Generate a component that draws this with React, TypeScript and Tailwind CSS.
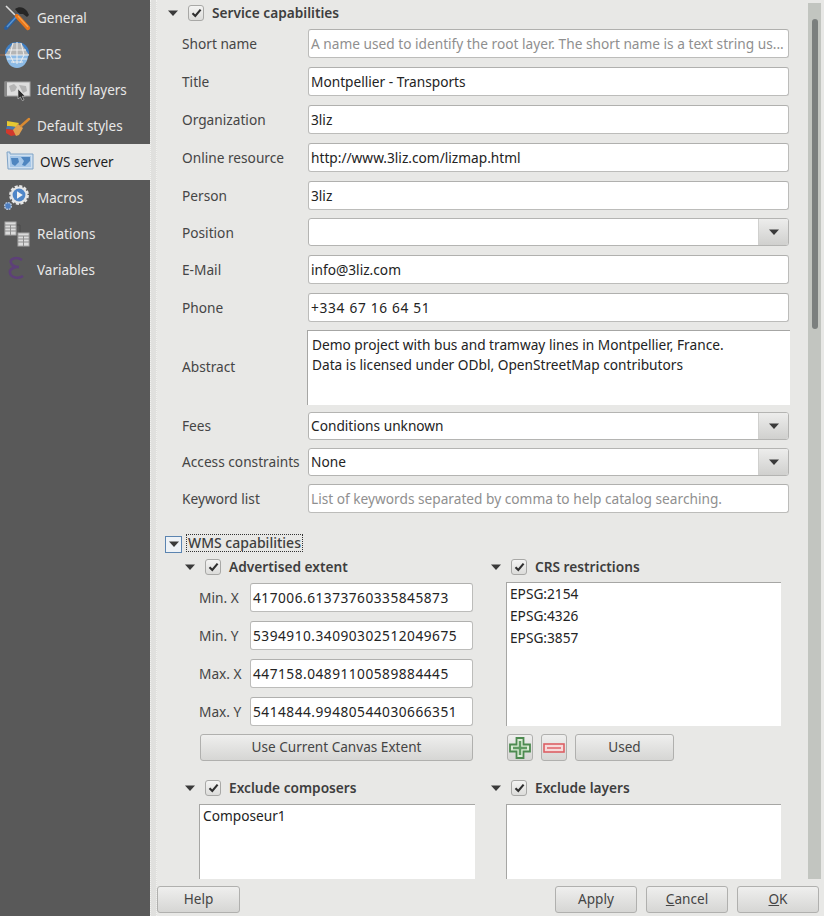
import React from 'react';

const font = { fontFamily: '"Noto Sans", sans-serif' };

function Arrow() {
  return (
    <svg width="10" height="6" viewBox="0 0 10 6" className="shrink-0">
      <path d="M0 0.5h10L5 6z" fill="#3a3a3a" />
    </svg>
  );
}

function Check() {
  return (
    <span className="w-[16px] h-[16px] shrink-0 rounded-[3px] border border-[#a8a8a6] bg-gradient-to-b from-[#f4f4f3] to-[#dcdcda] flex items-center justify-center">
      <svg width="11" height="10" viewBox="0 0 11 10">
        <path d="M1.5 5.2 4.3 8 9.6 1.6" fill="none" stroke="#2f2f2f" strokeWidth="2.1" />
      </svg>
    </span>
  );
}

function GroupTitle({ label }: { label: string }) {
  return (
    <div className="flex items-center h-[20px]">
      <Arrow />
      <span className="ml-[10px]"><Check /></span>
      <span className="ml-[8px] font-semibold text-[#3e3e3e] text-[13.7px]">{label}</span>
    </div>
  );
}

function Field({ value, placeholder, spaced }: { value?: string; placeholder?: boolean; spaced?: string }) {
  return (
    <div
      className={`flex-1 h-[29px] min-w-0 px-[2px] pt-[2px] flex items-center rounded-[3px] border border-[#bcbcba] border-t-[#b0b0ae] bg-white text-[13.7px] whitespace-nowrap overflow-hidden ${
        placeholder ? 'text-[#8f8f8f]' : 'text-[#232323]'
      } ${spaced ?? ''}`}
    >
      {value}
    </div>
  );
}

function Combo({ value }: { value?: string }) {
  return (
    <div className="flex-1 h-[28px] flex rounded-[3px] border border-[#b4b4b2] bg-white text-[13.7px] text-[#232323] overflow-hidden">
      <span className="flex-1 px-[2px] pt-[2px] flex items-center">{value}</span>
      <span className="w-[30px] flex items-center justify-center border-l border-[#d0d0ce] bg-gradient-to-b from-[#ededec] to-[#d0d0ce]">
        <Arrow />
      </span>
    </div>
  );
}

function Row({ label, h, children }: { label: string; h: string; children: React.ReactNode }) {
  return (
    <div className={`flex items-center ${h}`}>
      <span className="w-[126px] shrink-0 pt-[2px] text-[13.7px] text-[#454545]">{label}</span>
      {children}
    </div>
  );
}

function Btn({ children, w }: { children: React.ReactNode; w: string }) {
  return (
    <div
      className={`${w} h-[27px] shrink-0 flex items-center justify-center rounded-[3px] border border-[#b0b0ae] bg-gradient-to-b from-[#efefee] to-[#d6d6d4] text-[13.6px] text-[#454545]`}
    >
      {children}
    </div>
  );
}

function ExtentRow({ label, value }: { label: string; value: string }) {
  return (
    <div className="flex items-center h-[38px]">
      <span className="w-[51px] shrink-0 pt-[2px] text-[13.7px] text-[#454545]">{label}</span>
      <Field value={value} spaced="tracking-[0.5px]" />
    </div>
  );
}

function Slot({ children }: { children: React.ReactNode }) {
  return (
    <svg width="36" height="36" viewBox="0 0 36 36" className="shrink-0">
      {children}
    </svg>
  );
}

function IconGeneral() {
  return (
    <Slot>
      <path d="M15 9c4-3 9-2 12 2l2 4-2 2-4-3-4 0-4-5z" fill="#262626" />
      <path d="M6 28 18 15" stroke="#2a5f9e" strokeWidth="4" strokeLinecap="round" />
      <path d="M7 27 17 16" stroke="#5b96d2" strokeWidth="1.4" />
      <path d="M6 6 15 15" stroke="#dcdcdc" strokeWidth="1.6" />
      <path d="M17 16 28 28" stroke="#e8751a" strokeWidth="4.4" strokeLinecap="round" />
      <path d="M18 16 28 27" stroke="#f7a14a" strokeWidth="1.2" />
    </Slot>
  );
}

function IconCrs() {
  return (
    <Slot>
      <path d="M0 19h5" stroke="#a06a4a" strokeWidth="1" />
      <ellipse cx="17" cy="17" rx="12" ry="11" fill="#3f7fc4" />
      <path d="M6 19a11 13 0 0 0 22 0z" fill="#8dbbe6" />
      <path d="M5 19 13 7h8l8 12z" fill="#b5b5b5" />
      <g fill="none" stroke="#eeeeee" strokeWidth="1">
        <path d="M8 14h18M5 19h24M7 23h20M11 26h12M13 7l-3 12 4 8M21 7l3 12-4 8M17 6v22" />
      </g>
    </Slot>
  );
}

function IconIdentify() {
  return (
    <Slot>
      <rect x="5" y="10" width="25" height="14" fill="#dedede" stroke="#a5a5a5" />
      <path d="M5 10h2v14H5z" fill="#8a8a8a" />
      <path d="M9 14l5-2 3 3-2 4-4 1zM19 13l7 1 1 5-4 2-2-4z" fill="#b5b5b5" />
      <path d="M18 17v10l2.4-2 2 3.6 1.6-.8-1.8-3.6h3z" fill="#2c2c2c" stroke="#d5d5d5" strokeWidth="0.6" />
    </Slot>
  );
}

function IconStyles() {
  return (
    <Slot>
      <path d="M7 13l12 2-3 4-9-1z" fill="#e6c832" />
      <path d="M7 18l9 1-2 3-8-1z" fill="#4a78b0" />
      <path d="M6 21l8 1 2 5-5 1-5-3z" fill="#d2382c" />
      <path d="M13 22l5-6 5 4-4 7-3 1z" fill="#e0a050" />
      <path d="M21 18 29 11" stroke="#d98a32" strokeWidth="2.4" strokeLinecap="round" />
    </Slot>
  );
}

function IconOws() {
  return (
    <Slot>
      <path d="M7 8h3v2h23v15H8z" fill="#cfe0f0" stroke="#7fa3c6" />
      <path d="M10 12h21v11H10z" fill="#a6c7e8" />
      <path d="M11 14h7l1 4-4 4-3-2zM21 13h9v4l-5 5-3-1 2-4z" fill="#4f86c0" />
    </Slot>
  );
}

function IconMacros() {
  return (
    <Slot>
      <circle cx="19" cy="15" r="8.6" fill="#e6e6e6" stroke="#e6e6e6" strokeWidth="2.6" strokeDasharray="3 1.5" />
      <circle cx="19" cy="15" r="6.4" fill="#4f86c8" />
      <path d="M17 11.2v7.6l5.8-3.8z" fill="#f2f2f2" />
      <circle cx="8" cy="26" r="3.4" fill="#4f7fc0" stroke="#b5c4d8" strokeWidth="1.4" strokeDasharray="1.8 0.8" />
    </Slot>
  );
}

function IconRelations() {
  const grid = (x: number, y: number) => (
    <g>
      <rect x={x} y={y} width="11" height="13" fill="#dcdcdc" stroke="#a8a8a8" />
      <path d={`M${x} ${y + 3}h11M${x} ${y + 6}h11M${x} ${y + 9}h11M${x + 5.5} ${y + 3}v10`} stroke="#8e8e8e" />
    </g>
  );
  return (
    <Slot>
      <path d="M16 9h4v8" fill="none" stroke="#4a4a4a" />
      {grid(5, 6)}
      {grid(18, 17)}
    </Slot>
  );
}

function IconVariables() {
  return (
    <Slot>
      <path d="M22 8C16 4 9 7 11 11c1 3 5 4 8 4-5 0-10 2-9 6 1 5 9 6 13 3" fill="none" stroke="#5d4078" strokeWidth="2.6" />
    </Slot>
  );
}

const sidebarItems = [
  { label: 'General', icon: <IconGeneral /> },
  { label: 'CRS', icon: <IconCrs /> },
  { label: 'Identify layers', icon: <IconIdentify /> },
  { label: 'Default styles', icon: <IconStyles /> },
  { label: 'OWS server', icon: <IconOws />, active: true },
  { label: 'Macros', icon: <IconMacros /> },
  { label: 'Relations', icon: <IconRelations /> },
  { label: 'Variables', icon: <IconVariables /> },
];

function Sidebar() {
  return (
    <div className="w-[150px] shrink-0 bg-[#595959]">
      {sidebarItems.map((item) =>
        item.active ? (
          <div key={item.label} className="h-[36px] flex items-center bg-[#e8e8e6] text-[#1e1e1e] text-[13.5px]">
            <span className="w-[40px] shrink-0 flex">{item.icon}</span>
            <span>{item.label}</span>
          </div>
        ) : (
          <div key={item.label} className="h-[36px] flex items-center text-[#e8e8e8] text-[13.5px]">
            <span className="w-[37px] shrink-0 flex">{item.icon}</span>
            <span>{item.label}</span>
          </div>
        ),
      )}
    </div>
  );
}

function ServiceCapabilities() {
  return (
    <div className="pl-[11px] pr-[18px]">
      <div className="pt-[3px]">
        <GroupTitle label="Service capabilities" />
      </div>
      <div className="pl-[14px] pt-[1px]">
        <Row label="Short name" h="h-[38px]">
          <Field placeholder value="A name used to identify the root layer. The short name is a text string us..." />
        </Row>
        <Row label="Title" h="h-[38px]"><Field value="Montpellier - Transports" /></Row>
        <Row label="Organization" h="h-[38px]"><Field value="3liz" /></Row>
        <Row label="Online resource" h="h-[38px]"><Field value="http://www.3liz.com/lizmap.html" /></Row>
        <Row label="Person" h="h-[38px]"><Field value="3liz" /></Row>
        <Row label="Position" h="h-[36px]"><Combo /></Row>
        <Row label="E-Mail" h="h-[38px]"><Field value="info@3liz.com" /></Row>
        <Row label="Phone" h="h-[38px]"><Field value="+334 67 16 64 51" spaced="tracking-[0.7px]" /></Row>
        <div className="flex items-center h-[75px] mt-[4px]">
          <span className="w-[125px] shrink-0 text-[13.7px] text-[#454545]">Abstract</span>
          <div className="flex-1 h-full mr-[-1px] bg-white border-t border-l border-[#a6a6a4] pl-[4px] pt-[4px] text-[13.7px] leading-[20px] text-[#232323]">
            <div>Demo project with bus and tramway lines in Montpellier, France.</div>
            <div>Data is licensed under ODbl, OpenStreetMap contributors</div>
          </div>
        </div>
        <Row label="Fees" h="h-[41px]"><Combo value="Conditions unknown" /></Row>
        <Row label="Access constraints" h="h-[31px]"><Combo value="None" /></Row>
        <Row label="Keyword list" h="h-[43px]">
          <Field placeholder value="List of keywords separated by comma to help catalog searching." />
        </Row>
      </div>
    </div>
  );
}

function ListBox({ h, lines, leading }: { h: string; lines: string[]; leading: string }) {
  return (
    <div className={`${h} bg-white border-t border-l border-[#a6a6a4] pl-[3px] text-[13.7px] text-[#232323] ${leading}`}>
      {lines.map((l) => (
        <div key={l}>{l}</div>
      ))}
    </div>
  );
}

function WmsCapabilities() {
  return (
    <div className="pt-[13px] pl-[8px]">
      <div className="flex items-center h-[19px]">
        <span className="w-[17px] h-[17px] mt-[3px] border border-[#5b84b0] bg-[#eef2f6] flex items-center justify-center">
          <Arrow />
        </span>
        <span className="ml-[4px] px-[1px] h-[18px] leading-[16px] border border-dotted border-[#333] text-[14px] font-medium text-[#3e3e3e]">
          WMS capabilities
        </span>
      </div>
      <div className="flex pl-[20px] pt-[5px]">
        <div className="w-[306px] shrink-0">
          <GroupTitle label="Advertised extent" />
          <div className="pl-[14px] pt-[1px] pr-[14px]">
            <div className="w-[274px]">
              <ExtentRow label="Min. X" value="417006.61373760335845873" />
              <ExtentRow label="Min. Y" value="5394910.34090302512049675" />
              <ExtentRow label="Max. X" value="447158.04891100589884445" />
              <ExtentRow label="Max. Y" value="5414844.99480544030666351" />
            </div>
            <div className="pt-[4px] pl-[1px]">
              <Btn w="w-[273px]">Use Current Canvas Extent</Btn>
            </div>
          </div>
          <div className="pt-[17px]">
            <GroupTitle label="Exclude composers" />
          </div>
          <div className="pl-[14px] pt-[6px]">
            <div className="w-[276px]">
              <ListBox h="h-[80px]" leading="leading-[22px]" lines={['Composeur1']} />
            </div>
          </div>
        </div>
        <div className="w-[296px] shrink-0">
          <GroupTitle label="CRS restrictions" />
          <div className="pl-[15px] pt-[5px]">
            <div className="w-[275px]">
              <ListBox h="h-[144px]" leading="leading-[22px]" lines={['EPSG:2154', 'EPSG:4326', 'EPSG:3857']} />
            </div>
            <div className="flex items-center gap-[8px] pt-[8px] pl-[1px]">
              <Btn w="w-[26px]">
                <svg width="24" height="24" viewBox="0 0 24 24">
                  <path d="M8.5 2h7v6.5H22v7h-6.5V22h-7v-6.5H2v-7h6.5z" fill="#dcecd6" stroke="#4d8a50" strokeWidth="1.8" />
                  <path d="M12 5v14M5 12h14" stroke="#5f9a62" strokeWidth="2.4" />
                </svg>
              </Btn>
              <Btn w="w-[26px]">
                <svg width="22" height="12" viewBox="0 0 22 12">
                  <rect x="1" y="2" width="20" height="8" fill="#f6dada" stroke="#dc5f64" strokeWidth="1.6" />
                  <rect x="4" y="5" width="14" height="2" fill="#e58085" />
                </svg>
              </Btn>
              <Btn w="w-[99px]">Used</Btn>
            </div>
          </div>
          <div className="pt-[17px]">
            <GroupTitle label="Exclude layers" />
          </div>
          <div className="pl-[15px] pt-[6px]">
            <div className="w-[275px]">
              <ListBox h="h-[80px]" leading="leading-[20px]" lines={[]} />
            </div>
          </div>
        </div>
      </div>
    </div>
  );
}

function Scrollbar() {
  return (
    <div className="w-[13px] shrink-0 mt-[3px] ml-[1px] mr-[3px] bg-[#c2c5c0] flex justify-center">
      <div className="w-[6px] h-[310px] mt-[16px] rounded-[3px] bg-[#7b7f7e]" />
    </div>
  );
}

function Footer() {
  return (
    <div className="h-[37px] shrink-0 flex items-start pt-[7px] pr-[5px]">
      <Btn w="w-[83px]">Help</Btn>
      <div className="ml-auto flex gap-[9px]">
        <Btn w="w-[82px]">Apply</Btn>
        <Btn w="w-[82px]"><span><span className="underline">C</span>ancel</span></Btn>
        <Btn w="w-[82px]"><span><span className="underline">O</span>K</span></Btn>
      </div>
    </div>
  );
}

export default function App() {
  return (
    <div style={font} className="w-[824px] h-[916px] flex bg-[#e8e8e6] overflow-hidden">
      <Sidebar />
      <div className="w-[7px] shrink-0 bg-[#e0e0de] border-x border-dotted border-[#f2f2f0]" />
      <div className="flex-1 min-w-0 flex flex-col">
        <div className="h-[879px] flex overflow-hidden">
          <div className="flex-1 min-w-0 overflow-hidden">
            <ServiceCapabilities />
            <WmsCapabilities />
          </div>
          <Scrollbar />
        </div>
        <Footer />
      </div>
    </div>
  );
}
